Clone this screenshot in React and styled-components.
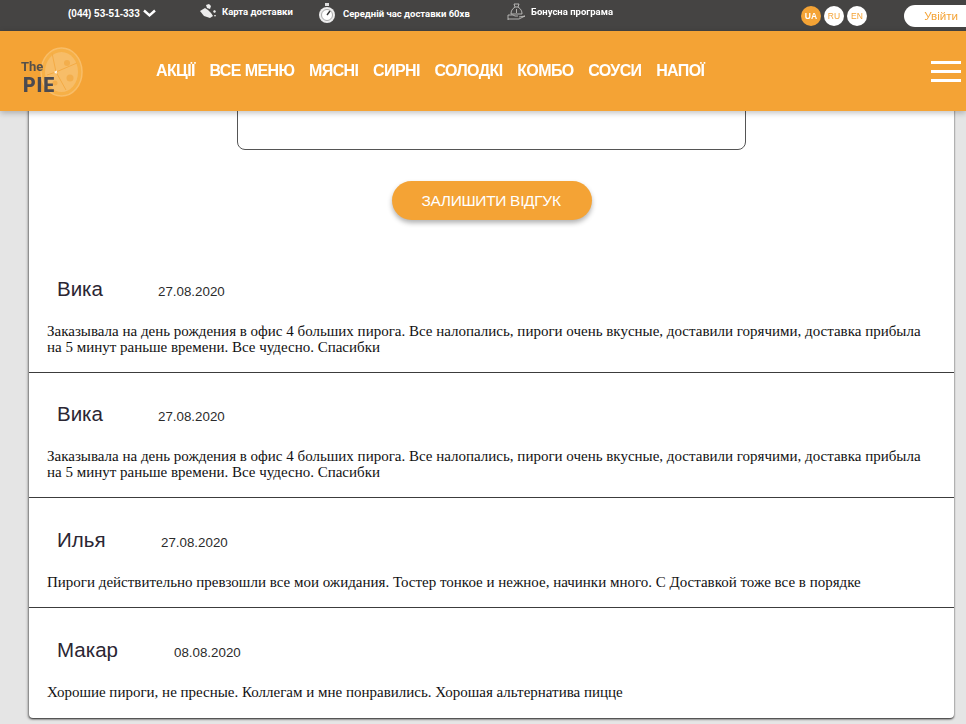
import React from 'react';
import styled, { createGlobalStyle } from 'styled-components';

const Global = createGlobalStyle`
  html, body { margin: 0; padding: 0; height: 100%; overflow: hidden; background: #e5e5e5; }
  * { box-sizing: border-box; }
`;
const Header = styled.header`position: fixed; top: 0; left: 0; right: 0; z-index: 5;`;
const TopBar = styled.div`
  height: 31px; background: #454443; display: flex; align-items: center; padding-left: 68px;
  font-family: Roboto, sans-serif; font-weight: 700; font-size: 9.5px; color: #fff;
`;
const TopItem = styled.div`
  display: flex; align-items: center; gap: ${p => p.$gap}px; width: ${p => p.$w}px; flex: none;
  margin-top: ${p => p.$up}px;
`;
const Phone = styled.span`font-size: 10px; font-family: "Liberation Sans", sans-serif;`;
const Langs = styled.div`display: flex; gap: 3px; width: 66px; flex: none;`;
const Lang = styled.span`
  width: 20px; height: 20px; border-radius: 50%; display: flex; align-items: center; justify-content: center;
  font: ${p => p.$on ? 700 : 400} 8.5px "Liberation Sans", sans-serif; color: ${p => p.$on ? '#fff' : '#f4a335'};
  background: ${p => p.$on ? '#f4a335' : '#fff'};
`;
const Login = styled.button`
  margin: 0 0 0 37px; width: 62px; height: 22px; border: 0; border-radius: 11px 0 0 11px; background: #fff;
  color: #f4a335; font: 400 11.6px "Liberation Sans", sans-serif; text-align: right; padding: 0 8px 0 0; flex: none;
`;
const NavBar = styled.div`
  height: 80px; background: #f4a335; display: flex; align-items: center; box-shadow: 0 2px 6px rgba(0,0,0,.25);
`;
const Logo = styled.div`position: relative; width: 62px; height: 50px; margin: 16px 73px 0 21px; flex: none; align-self: flex-start;`;
const LogoThe = styled.span`position: absolute; left: 0; top: 13px; font: 700 13px Roboto, sans-serif; color: #55504a; line-height: 14px;`;
const LogoPie = styled.span`position: absolute; left: 2px; top: 29px; font: 900 19.5px Roboto, sans-serif; color: #4b4a50; line-height: 20px; letter-spacing: .8px;`;
const PizzaSvg = styled.svg`position: absolute; left: 19px; top: 0; width: 43px; height: 50px; filter: blur(.5px);`;
const Nav = styled.nav`display: flex; gap: 14.65px; flex: none; width: 775px;`;
const NavLink = styled.a`font: 700 16px "Liberation Sans", sans-serif; letter-spacing: -.6px; color: #fff; white-space: nowrap; line-height: 20px;`;
const Burger = styled.div`
  width: 30px; display: flex; flex-direction: column; gap: 6px; margin-top: 1px;
  span { display: block; height: 3px; background: #fff; }
`;
const Card = styled.main`
  margin: 0 12px 0 29px; height: 718px; background: #fff; border-radius: 0 0 4px 4px;
  box-shadow: -1px 1px 3px rgba(0,0,0,.35), 0 1px 2px rgba(0,0,0,.7);
  display: flex; flex-direction: column; overflow: hidden;
`;
const Form = styled.div`display: flex; flex-direction: column; align-items: center; padding-top: 50px; margin-bottom: 35px;`;
const Area = styled.div`width: 509px; height: 100px; border: 1px solid #555; border-radius: 8px;`;
const Submit = styled.button`
  margin: 31px 0 0 1px; width: 200px; height: 39px; border: 0; border-radius: 20px; background: #f4a335; color: #fff;
  padding: 0 8px 0 6px; font: 400 15.5px "Liberation Sans", sans-serif; letter-spacing: -.32px; box-shadow: 0 3px 5px rgba(0,0,0,.3);
`;
const Review = styled.article`
  height: ${p => p.$h}px; padding: ${p => p.$top}px 18px 0;
  border-bottom: ${p => p.$last ? 0 : '1px solid #3c3c3c'};
`;
const Head = styled.div`display: flex; align-items: center; height: 30px; margin-bottom: 19px;`;
const Name = styled.h3`
  margin: 0 0 0 10px; font: 400 20.5px "Liberation Sans", sans-serif; color: #2b2633; width: ${p => p.$w}px; flex: none;
`;
const Stamp = styled.time`font: 400 13.33px "Liberation Sans", sans-serif; color: #2b2b2b; padding-top: 5px;`;
const Text = styled.p`margin: 0; font: 400 15px/16px "Liberation Serif", serif; color: #111; width: 890px;`;

const Bag = () => (
  <svg width="19" height="19" viewBox="0 0 19 19" fill="none" stroke="#cfcfcd" strokeWidth=".8">
    <path d="M7 2h5l-1 3h-3zM8 5c-3 2-4 4-4 7h11c0-3-1-5-4-7" /><path d="M1 13h5l2 1h3M1 17h11l6-3-6 1M1 13v5" />
    <path d="M9.5 7v4" />
  </svg>
);
const Watch = () => (
  <svg width="18" height="21" viewBox="0 0 18 21"><rect x="7" y="0" width="4" height="3" fill="#ddd" /><circle cx="9" cy="12" r="8" fill="#ececec" /><circle cx="9" cy="12" r="5.5" fill="#fff" stroke="#777" strokeWidth=".6" /><path d="M9 12l3-4" stroke="#333" strokeWidth="1.4" /></svg>
);
const MapIcon = () => (
  <svg width="17" height="15" viewBox="0 0 17 15" fill="#ececec"><path d="M0 7l5-3 3 2 3 3 2 3-3 2-6-2z" /><path d="M6 1l3-1 2 2-1 3-3-1zM13 7l2-1 1 2-2 1zM14 11l2 0-1 2z" /></svg>
);
const Chevron = () => (
  <svg width="13" height="9" viewBox="0 0 13 9" fill="none" stroke="#fff" strokeWidth="2.4"><path d="M1 1.5l5.5 5 5.5-5" /></svg>
);
const Pizza = () => (
  <PizzaSvg viewBox="0 0 43 50" fill="none">
    <ellipse cx="21.5" cy="25" rx="20.5" ry="24" fill="#f6b047" stroke="#f8bd68" strokeWidth="1.5" />
    <ellipse cx="21.5" cy="25" rx="16.5" ry="20" fill="#f7bd68" />
    <path d="M16 25L12 6M16 25l21-9M16 25l10 18M16 25l-9 3" stroke="#f4ab45" strokeWidth="1" />
    <circle cx="27" cy="16" r="3" fill="#f3ae4c" /><circle cx="30" cy="31" r="3.5" fill="#f3ae4c" /><circle cx="15" cy="36" r="2.5" fill="#f3ae4c" />
    <path d="M14 25l3-1.5-.5 3.5z" fill="#fff" />
  </PizzaSvg>
);

const links = ['АКЦІЇ', 'ВСЕ МЕНЮ', 'МЯСНІ', 'СИРНІ', 'СОЛОДКІ', 'КОМБО', 'СОУСИ', 'НАПОЇ'];
const long = 'Заказывала на день рождения в офис 4 больших пирога. Все налопались, пироги очень вкусные, доставили горячими, доставка прибыла на 5 минут раньше времени. Все чудесно. Спасибки';
const reviews = [
  { name: 'Вика', w: 101, date: '27.08.2020', text: long, h: 118, top: 19 },
  { name: 'Вика', w: 101, date: '27.08.2020', text: long, h: 125, top: 26 },
  { name: 'Илья', w: 104, date: '27.08.2020', text: 'Пироги действительно превзошли все мои ожидания. Тостер тонкое и нежное, начинки много. С Доставкой тоже все в порядке', h: 110, top: 27 },
  { name: 'Макар', w: 117, date: '08.08.2020', text: 'Хорошие пироги, не пресные. Коллегам и мне понравились. Хорошая альтернатива пицце', h: 110, top: 27, last: true },
];

export default function App() {
  return (
    <>
      <Global />
      <Header>
        <TopBar>
          <TopItem $w={132} $gap={3} $up={-5}><Phone>(044) 53-51-333</Phone><Chevron /></TopItem>
          <TopItem $w={118} $gap={5} $up={-8}><MapIcon /><span>Карта доставки</span></TopItem>
          <TopItem $w={189} $gap={7} $up={-5}><Watch /><span>Середній час доставки 60хв</span></TopItem>
          <TopItem $w={294} $gap={5} $up={-8}><Bag /><span>Бонусна програма</span></TopItem>
          <Langs><Lang $on>UA</Lang><Lang>RU</Lang><Lang>EN</Lang></Langs>
          <Login>Увійти</Login>
        </TopBar>
        <NavBar>
          <Logo><Pizza /><LogoThe>The</LogoThe><LogoPie>PIE</LogoPie></Logo>
          <Nav>{links.map(l => <NavLink key={l}>{l}</NavLink>)}</Nav>
          <Burger><span /><span /><span /></Burger>
        </NavBar>
      </Header>
      <Card>
        <Form><Area /><Submit>ЗАЛИШИТИ ВІДГУК</Submit></Form>
        {reviews.map((r, i) => (
          <Review key={i} $h={r.h} $top={r.top} $last={r.last}>
            <Head><Name $w={r.w}>{r.name}</Name><Stamp>{r.date}</Stamp></Head>
            <Text>{r.text}</Text>
          </Review>
        ))}
      </Card>
    </>
  );
}
